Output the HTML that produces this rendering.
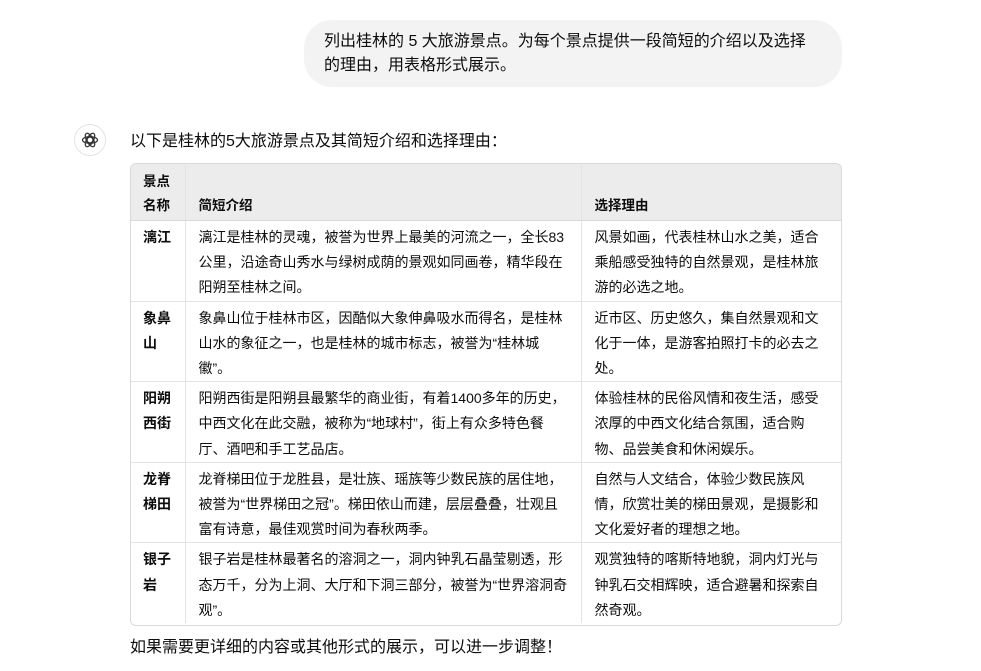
<!DOCTYPE html>
<html><head><meta charset="utf-8"><style>
body{margin:0;width:981px;height:671px;background:#fff;font-family:"Liberation Sans","Noto Sans CJK SC",sans-serif;color:#0d0d0d;position:relative;overflow:hidden}
.bubble{position:absolute;left:304px;top:20px;width:538px;height:67px;background:#f3f3f3;border-radius:28px;box-sizing:border-box;padding:10px 28px 10px 20px;font-size:16px;line-height:24px}
.av{position:absolute;left:74px;top:124px;width:32px;height:32px;border:1px solid #e3e3e3;border-radius:50%;box-sizing:border-box;display:flex;align-items:center;justify-content:center}
.intro{position:absolute;left:130px;top:130px;font-size:16px;line-height:24px}
.outro{position:absolute;left:130px;top:636px;font-size:16px;line-height:24px}
.tw{position:absolute;left:130px;top:163px;width:712px;height:463px;border:1px solid #d9d9d9;border-radius:6px;box-sizing:border-box;overflow:hidden}
table{border-collapse:collapse;width:710px;table-layout:fixed;font-size:14px;line-height:25.2px}
th{background:#ececec;text-align:left;font-weight:bold;vertical-align:bottom;padding:4px 13px 2px;line-height:24px;height:50px;border-bottom:1px solid #d9d9d9;font-size:13.5px}
td{vertical-align:top;padding:4px 13px 0;height:80px;box-sizing:border-box;border-top:1px solid #e3e3e3}
th:first-child{padding:4px 4px 2px 12px}
td:first-child{padding:4px 4px 0 12px;font-weight:bold}
th+th,td+td{border-left:1px solid #e3e3e3}
tr:nth-child(2) td{border-top:none}
</style></head><body>
<div class="bubble">列出桂林的 5 大旅游景点。为每个景点提供一段简短的介绍以及选择的理由，用表格形式展示。</div>
<div class="av"><svg width="20" height="20" viewBox="0 0 24 24" fill="none" stroke="#333" stroke-width="1.5"><circle cx="12" cy="12" r="3.5"/><ellipse cx="12" cy="12" rx="9" ry="4"/><ellipse cx="12" cy="12" rx="9" ry="4" transform="rotate(60 12 12)"/><ellipse cx="12" cy="12" rx="9" ry="4" transform="rotate(120 12 12)"/></svg></div>
<div class="intro">以下是桂林的5大旅游景点及其简短介绍和选择理由：</div>
<div class="tw"><table>
<colgroup><col style="width:54px"><col style="width:396px"><col style="width:260px"></colgroup>
<tr><th>景点名称</th><th>简短介绍</th><th>选择理由</th></tr>
<tr><td>漓江</td><td>漓江是桂林的灵魂，被誉为世界上最美的河流之一，全长83公里，沿途奇山秀水与绿树成荫的景观如同画卷，精华段在阳朔至桂林之间。</td><td>风景如画，代表桂林山水之美，适合乘船感受独特的自然景观，是桂林旅游的必选之地。</td></tr>
<tr><td>象鼻山</td><td>象鼻山位于桂林市区，因酷似大象伸鼻吸水而得名，是桂林山水的象征之一，也是桂林的城市标志，被誉为“桂林城徽”。</td><td>近市区、历史悠久，集自然景观和文化于一体，是游客拍照打卡的必去之处。</td></tr>
<tr><td>阳朔西街</td><td>阳朔西街是阳朔县最繁华的商业街，有着1400多年的历史，中西文化在此交融，被称为“地球村”，街上有众多特色餐厅、酒吧和手工艺品店。</td><td>体验桂林的民俗风情和夜生活，感受浓厚的中西文化结合氛围，适合购物、品尝美食和休闲娱乐。</td></tr>
<tr><td>龙脊梯田</td><td>龙脊梯田位于龙胜县，是壮族、瑶族等少数民族的居住地，被誉为“世界梯田之冠”。梯田依山而建，层层叠叠，壮观且富有诗意，最佳观赏时间为春秋两季。</td><td>自然与人文结合，体验少数民族风情，欣赏壮美的梯田景观，是摄影和文化爱好者的理想之地。</td></tr>
<tr><td>银子岩</td><td>银子岩是桂林最著名的溶洞之一，洞内钟乳石晶莹剔透，形态万千，分为上洞、大厅和下洞三部分，被誉为“世界溶洞奇观”。</td><td>观赏独特的喀斯特地貌，洞内灯光与钟乳石交相辉映，适合避暑和探索自然奇观。</td></tr>
</table></div>
<div class="outro">如果需要更详细的内容或其他形式的展示，可以进一步调整！</div>
</body></html>
